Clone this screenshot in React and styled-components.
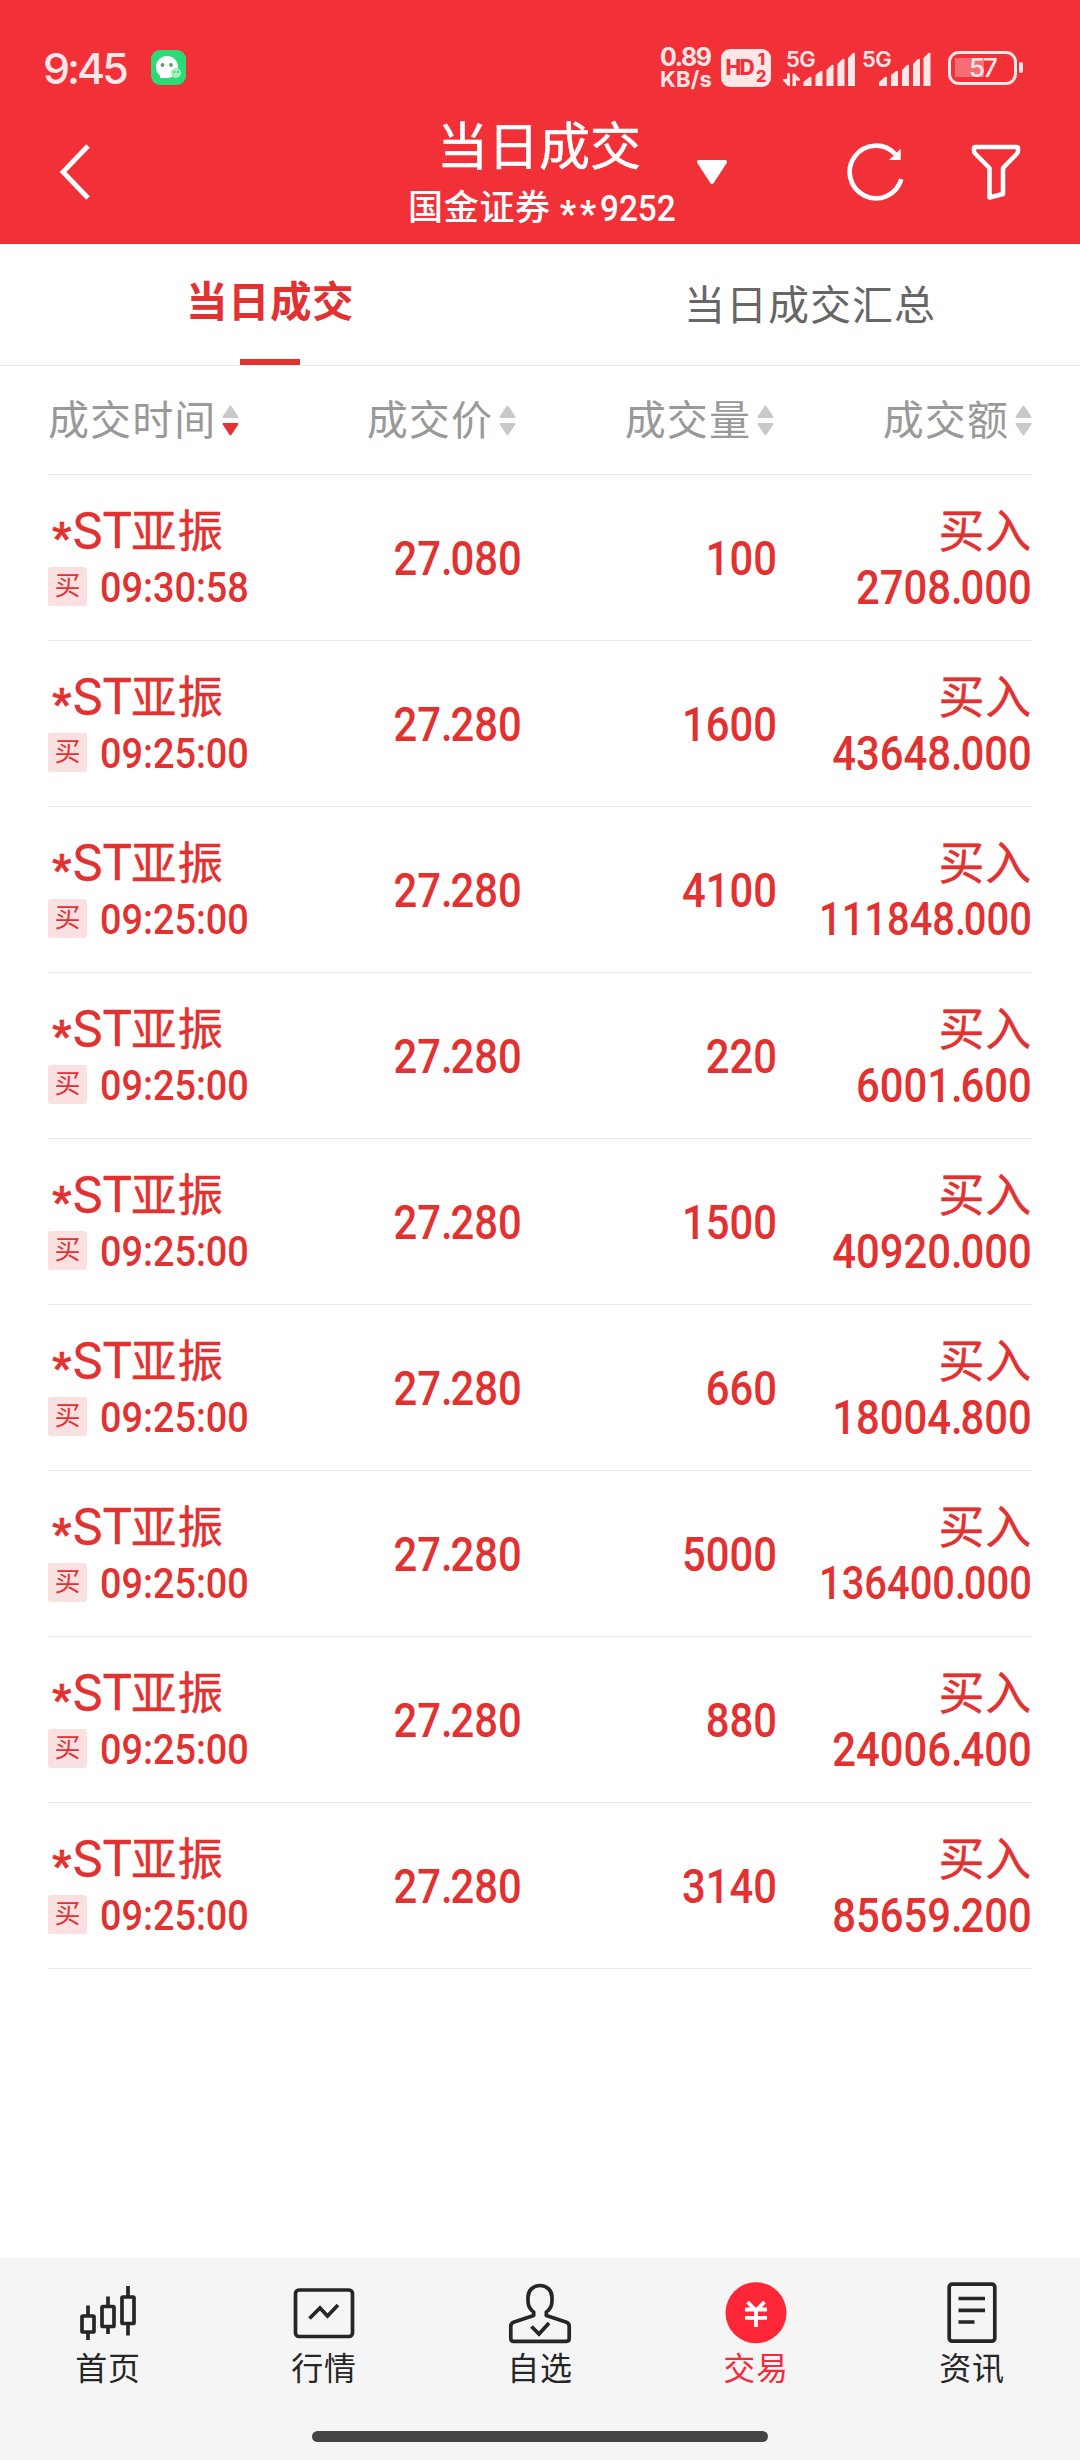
import styled, { createGlobalStyle } from "styled-components";

const GlobalStyle = createGlobalStyle`
  * {
    box-sizing: border-box;
  }
  body {
    margin: 0;
    background: #fff;
    font-family: Roboto, "Noto Sans CJK SC", sans-serif;
  }
  svg {
    display: block;
    flex: none;
  }
`;

const trades = [
  { time: "09:30:58", price: "27.080", volume: "100", amount: "2708.000" },
  { time: "09:25:00", price: "27.280", volume: "1600", amount: "43648.000" },
  { time: "09:25:00", price: "27.280", volume: "4100", amount: "111848.000" },
  { time: "09:25:00", price: "27.280", volume: "220", amount: "6001.600" },
  { time: "09:25:00", price: "27.280", volume: "1500", amount: "40920.000" },
  { time: "09:25:00", price: "27.280", volume: "660", amount: "18004.800" },
  { time: "09:25:00", price: "27.280", volume: "5000", amount: "136400.000" },
  { time: "09:25:00", price: "27.280", volume: "880", amount: "24006.400" },
  { time: "09:25:00", price: "27.280", volume: "3140", amount: "85659.200" },
];

const Screen = styled.div`
  width: 1080px;
  height: 2460px;
  display: flex;
  flex-direction: column;
  background: #fff;
`;

const Header = styled.header`
  height: 244px;
  background: #f23038;
  color: #fff;
`;

const StatusBar = styled.div`
  height: 102px;
  padding: 33px 57px 0 43px;
  display: flex;
  align-items: center;
  color: #ffe7e8;
`;

const Clock = styled.div`
  width: 108px;
  font-family: Inter, sans-serif;
  font-size: 43px;
  line-height: 50px;
  font-weight: 500;
  letter-spacing: -3px;
`;

const NetSpeed = styled.div`
  width: 61px;
  margin-left: auto;
  padding-top: 3px;
  display: flex;
  flex-direction: column;
  font-family: Inter, sans-serif;
  font-weight: 700;
  > span {
    font-size: 25px;
    line-height: 21px;
    letter-spacing: -1.4px;
  }
  > span + span {
    font-size: 22px;
    line-height: 23px;
    letter-spacing: 0.2px;
  }
`;

const HdBadge = styled.div`
  width: 50px;
  height: 38px;
  border-radius: 9px;
  background: #ffe7e8;
  color: #f23038;
  display: flex;
  align-items: center;
  justify-content: center;
  gap: 3px;
  font-family: Inter, sans-serif;
  font-weight: 800;
  font-size: 21px;
  letter-spacing: -1.6px;
  > div {
    display: flex;
    flex-direction: column;
    align-items: center;
    font-size: 16.5px;
    line-height: 17px;
    letter-spacing: 0;
  }
`;

const Signal = styled.div`
  width: ${(props) => (props.$data ? 72 : 70)}px;
  height: 38px;
  margin-left: ${(props) => (props.$data ? 12 : 7)}px;
  display: grid;
  > * {
    grid-area: 1 / 1;
  }
  > span {
    padding-left: ${(props) => (props.$data ? 3 : 0)}px;
    font-family: Inter, sans-serif;
    font-size: 22px;
    line-height: 20px;
    font-weight: 600;
    letter-spacing: -0.5px;
  }
`;

const Battery = styled.div`
  width: 69px;
  height: 34px;
  margin-left: 16px;
  border: 3.5px solid #ffe7e8;
  border-radius: 11px;
  display: flex;
  align-items: center;
  justify-content: center;
  background: linear-gradient(#f66d73, #f66d73) 4px 4px / 29px 19px no-repeat;
  font-family: Inter, sans-serif;
  font-size: 26px;
  line-height: 27px;
  font-weight: 500;
  letter-spacing: -2px;
`;

const BatteryTip = styled.div`
  width: 4px;
  height: 11px;
  margin-left: 2px;
  border-radius: 2px;
  background: #ffe7e8;
`;

const TitleBar = styled.div`
  height: 140px;
  display: grid;
  grid-template-columns: 1fr 264px 1fr;
  align-items: center;
`;

const BackButton = styled.div`
  padding-left: 56px;
`;

const Titles = styled.div`
  padding-top: 7px;
  display: flex;
  flex-direction: column;
  align-items: center;
  white-space: nowrap;
`;

const Title = styled.div`
  padding-right: 2px;
  font-size: 51px;
  line-height: 60px;
  font-weight: 400;
  -webkit-text-stroke: 0.5px currentColor;
`;

const Account = styled.div`
  width: 264px;
  height: 56px;
  padding-top: 6px;
  display: flex;
  align-items: center;
  font-size: 35px;
  line-height: 50px;
  letter-spacing: 0.7px;
  font-weight: 500;
`;

const Mask = styled.span`
  margin-left: 9px;
  padding-top: 10px;
  font-size: 36px;
  font-weight: 700;
  letter-spacing: 3.5px;
`;

const Actions = styled.div`
  display: flex;
  align-items: center;
  padding-left: 21px;
`;

const Digits = styled.span`
  display: inline-block;
  transform: scaleX(${(props) => props.$narrow || 0.88});
  transform-origin: ${(props) => props.$origin || "right"} center;
  font-size: ${(props) => props.$size || 47.5}px;
  letter-spacing: 0;
  font-weight: 500;
  white-space: nowrap;
`;

const Dot = styled.span`
  letter-spacing: -2.5px;
`;

const Tabs = styled.nav`
  height: 122px;
  display: grid;
  grid-template-columns: 1fr 1fr;
  border-bottom: 1px solid #ececec;
`;

const Tab = styled.div`
  display: flex;
  flex-direction: column;
  align-items: center;
  justify-content: space-between;
  padding-top: ${(props) => (props.$active ? 29 : 32)}px;
  color: ${(props) => (props.$active ? "#e23131" : "#666")};
  font-size: ${(props) => (props.$active ? 41.5 : 41)}px;
  line-height: 60px;
  letter-spacing: ${(props) => (props.$active ? 0.5 : 1)}px;
  font-weight: ${(props) => (props.$active ? 600 : 400)};
`;

const Underline = styled.i`
  width: 60px;
  height: 6px;
  background: #e23131;
`;

const TableHead = styled.div`
  height: 109px;
  margin: 0 48px;
  display: grid;
  grid-template-columns: 210px repeat(3, 258px);
  align-items: center;
  border-bottom: 1px solid #ececec;
`;

const HeadCell = styled.div`
  display: flex;
  align-items: center;
  justify-content: flex-end;
  gap: 6px;
  color: #999;
  font-size: 41px;
  line-height: 60px;
  letter-spacing: 1.1px;
  white-space: nowrap;
  &:first-child {
    justify-content: flex-start;
  }
  > span {
    padding-top: 2px;
  }
`;

const Rows = styled.div`
  flex: 1;
  padding: 0 48px;
`;

const Row = styled.div`
  height: 166px;
  padding-top: 26px;
  display: grid;
  grid-template-columns: 219px repeat(3, 255px);
  border-bottom: 1px solid #ececec;
  color: #e23131;
`;

const Cell = styled.div`
  display: flex;
  flex-direction: column;
  align-items: ${(props) => (props.$left ? "flex-start" : "flex-end")};
  line-height: 60px;
`;

const Middle = styled(Cell)`
  padding-top: 28px;
`;

const Name = styled.div`
  height: 60px;
  padding-left: 4px;
  font-size: 45.5px;
  letter-spacing: 1px;
  white-space: nowrap;
  -webkit-text-stroke: 0.4px currentColor;
  > span {
    font-family: Inter, sans-serif;
    font-size: 49px;
    letter-spacing: -2px;
  }
`;

const Star = styled.b`
  display: inline-block;
  width: 20px;
  font-size: 42px;
  font-weight: 800;
  line-height: 1;
  vertical-align: -4px;
`;

const Side = styled.div`
  height: 60px;
  font-size: 46px;
  letter-spacing: 0.8px;
  -webkit-text-stroke: 0.4px currentColor;
`;

const SubLine = styled.div`
  height: 50px;
  display: flex;
  align-items: center;
  gap: 13px;
  > ${Digits} {
    padding-top: 4px;
  }
`;

const Tag = styled.div`
  width: 39px;
  height: 39px;
  border-radius: 3px;
  background: #fbe0e1;
  font-size: 26px;
  line-height: 38px;
  text-align: center;
`;

const BottomNav = styled.footer`
  height: 202px;
  padding-top: 23px;
  background: #f5f5f5;
`;

const NavItems = styled.div`
  height: 150px;
  display: grid;
  grid-template-columns: repeat(5, 1fr);
`;

const NavItem = styled.div`
  display: flex;
  flex-direction: column;
  align-items: center;
  color: ${(props) => (props.$active ? "#f52a3b" : "#262626")};
  > span {
    padding-top: 1px;
    font-size: 32px;
    line-height: 46px;
    letter-spacing: 0.7px;
  }
`;

const HomeIndicator = styled.div`
  width: 456px;
  height: 11px;
  margin: 0 auto;
  border-radius: 6px;
  background: #444;
`;

const WechatIcon = () => (
  <svg width="35" height="35" viewBox="0 0 35 35">
    <rect width="35" height="35" rx="9" fill="#2bdc76" />
    <path d="M5 17a11 11 0 1 1 11 11H9v-2.500A11 11 0 0 1 5 17z" fill="#fff" />
    <circle cx="11.500" cy="15" r="1.900" fill="#5d9a78" />
    <circle cx="20" cy="15" r="1.900" fill="#5d9a78" />
    <circle cx="25" cy="23" r="5" fill="#9ff5b9" />
    <circle cx="23.300" cy="22" r="0.900" fill="#39b568" />
    <circle cx="26.800" cy="22" r="0.900" fill="#39b568" />
  </svg>
);

const SignalBars = ({ data }) => (
  <svg width="72" height="38" viewBox="0 0 72 38" fill="currentColor">
    <g transform={data ? "translate(20.5 0)" : "translate(17 0)"}>
      <path d="M0 37v-4l6-5q2-1 2 1v8zM12 37V26l5-4q2-1 2 1v14zM23 37V21l5-5q2-1 2 1v20zM34 37V15l5-5q2-1 2 1v26zM44.500 37V9l5-5q2-1 2 1v32z" />
    </g>
    {data && <path d="M4 24.500h3V37H5L0 31.500V30h4zM9.500 24.500h2L17 30v1.500h-4V37H9.500z" />}
  </svg>
);

const SortIcon = ({ active }) => (
  <svg width="17" height="31" viewBox="0 0 17 31" strokeLinejoin="round" strokeWidth="2">
    <path d="M8.500 1.500L15.500 12H1.500z" fill="#c9c9c9" stroke="#c9c9c9" />
    <path
      d="M8.500 29.500L15.500 19H1.500z"
      fill={active ? "#e43131" : "#c9c9c9"}
      stroke={active ? "#e43131" : "#c9c9c9"}
    />
  </svg>
);

const NavIcon = ({ children }) => (
  <svg width="64" height="64" viewBox="0 0 64 64" fill="none" stroke="currentColor" strokeWidth="3.700">
    {children}
  </svg>
);

// the decimal point is set tighter than the digits around it
const Amount = ({ value, size }) => {
  const [whole, fraction] = value.split(".");
  return (
    <Digits $size={size}>
      {whole}
      <Dot>.</Dot>
      {fraction}
    </Digits>
  );
};

const navItems = [
  {
    label: "首页",
    icon: (
      <NavIcon>
        <rect x="6" y="35" width="12" height="16" rx="1" />
        <rect x="26" y="25.500" width="12" height="20" rx="1" />
        <rect x="46" y="16" width="12" height="26.500" rx="1" />
        <path d="M12 24.500V34M12 52v7M32 15.500V25M32 46v7M52 5v10M52 43v11.500" />
      </NavIcon>
    ),
  },
  {
    label: "行情",
    icon: (
      <NavIcon>
        <rect x="3.500" y="9" width="57" height="46.500" rx="3.500" />
        <path d="M17.500 37.500L28 27L35.500 35L46 24" />
      </NavIcon>
    ),
  },
  {
    label: "自选",
    icon: (
      <NavIcon>
        <path
          d="M25.700 34.500v-3.500C22 28.500 20 25 20 20v-3.500C20 9.500 25 4.500 32 4.500S44 9.500 44 16.500V20c0 5-2 8.500-5.700 11v3.500L58.500 41.300Q61.200 42.500 61.200 45V57.500Q61.200 60.300 58.500 60.300H5.500Q2.800 60.300 2.800 57.500V45Q2.800 42.500 5.500 41.300z"
          strokeLinejoin="round"
        />
        <path d="M23.500 45.500L31 53L41 42" />
      </NavIcon>
    ),
  },
  {
    label: "交易",
    active: true,
    icon: (
      <NavIcon>
        <circle cx="32" cy="31.800" r="30.500" fill="#ff2638" stroke="none" />
        <path d="M23.500 21L32 29.500L40.500 21M21 28.500H43M21 36.800H43M32 28V46" stroke="#fff" strokeWidth="3.800" />
      </NavIcon>
    ),
  },
  {
    label: "资讯",
    icon: (
      <NavIcon>
        <rect x="9.200" y="3.200" width="45.600" height="57" rx="3" />
        <path d="M18.500 17.500H45M18.500 29.300H45M18.500 41H34.500" />
      </NavIcon>
    ),
  },
];

export default function App() {
  return (
    <Screen>
      <GlobalStyle />
      <Header>
        <StatusBar>
          <Clock>9:45</Clock>
          <WechatIcon />
          <NetSpeed>
            <span>0.89</span>
            <span>KB/s</span>
          </NetSpeed>
          <HdBadge>
            HD
            <div>
              <span>1</span>
              <span>2</span>
            </div>
          </HdBadge>
          <Signal $data>
            <span>5G</span>
            <SignalBars data />
          </Signal>
          <Signal>
            <span>5G</span>
            <SignalBars />
          </Signal>
          <Battery>57</Battery>
          <BatteryTip />
        </StatusBar>
        <TitleBar>
          <BackButton>
            <svg width="36" height="58" viewBox="0 0 36 58" fill="none" stroke="#fff" strokeWidth="4.800">
              <path d="M32 3L7 29L32 55" />
            </svg>
          </BackButton>
          <Titles>
            <Title>当日成交</Title>
            <Account>
              国金证券
              <Mask>**</Mask>
              <Digits $size={37} $origin="left" $narrow={0.9}>9252</Digits>
            </Account>
          </Titles>
          <Actions>
            <svg width="38" height="30" viewBox="0 0 38 30">
              <path d="M6 5H32L19 25z" fill="#fff" stroke="#fff" strokeWidth="4" strokeLinejoin="round" />
            </svg>
            <svg width="60" height="60" viewBox="0 0 60 60" style={{ marginLeft: 115 }}>
              <path d="M49.200 12A26.300 26.300 0 1 0 55.300 37.200" fill="none" stroke="#fff" strokeWidth="4.700" />
              <path d="M54.700 6.700V18H43z" fill="#fff" />
            </svg>
            <svg width="52" height="58" viewBox="0 0 52 58" style={{ marginLeft: 64 }}>
              <path
                d="M5.500 4H46.500Q48 4 48 5.500V8Q48 9.500 47 10.500L33 25V51L19.500 54.500V25L5 10.500Q4 9.500 4 8V5.500Q4 4 5.500 4z"
                fill="none"
                stroke="#fff"
                strokeWidth="4.500"
                strokeLinejoin="round"
              />
            </svg>
          </Actions>
        </TitleBar>
      </Header>

      <Tabs>
        <Tab $active>
          当日成交
          <Underline />
        </Tab>
        <Tab>当日成交汇总</Tab>
      </Tabs>

      <TableHead>
        {["成交时间", "成交价", "成交量", "成交额"].map((title, i) => (
          <HeadCell key={title}>
            <span>{title}</span>
            <SortIcon active={i === 0} />
          </HeadCell>
        ))}
      </TableHead>

      <Rows>
        {trades.map((trade, i) => (
          <Row key={i}>
            <Cell $left>
              <Name>
                <Star>*</Star>
                <span>ST</span>亚振
              </Name>
              <SubLine>
                <Tag>买</Tag>
                <Digits $size={42} $origin="left" $narrow={0.9}>{trade.time}</Digits>
              </SubLine>
            </Cell>
            <Middle>
              <Amount value={trade.price} />
            </Middle>
            <Middle>
              <Digits>{trade.volume}</Digits>
            </Middle>
            <Cell>
              <Side>买入</Side>
              <SubLine>
                <Amount value={trade.amount} size={trade.amount.length > 9 ? 45.3 : 47.5} />
              </SubLine>
            </Cell>
          </Row>
        ))}
      </Rows>

      <BottomNav>
        <NavItems>
          {navItems.map((item) => (
            <NavItem key={item.label} $active={item.active}>
              {item.icon}
              <span>{item.label}</span>
            </NavItem>
          ))}
        </NavItems>
        <HomeIndicator />
      </BottomNav>
    </Screen>
  );
}
